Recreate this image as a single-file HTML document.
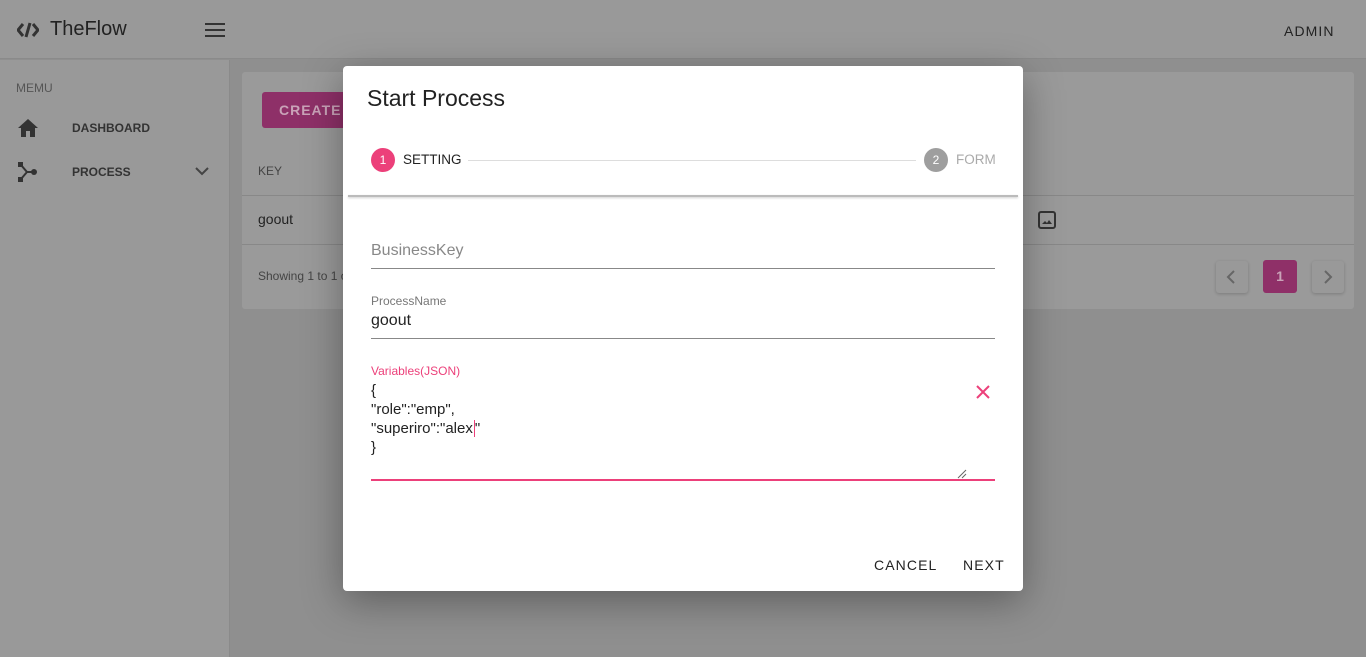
<!DOCTYPE html>
<html><head><meta charset="utf-8"><style>
*{box-sizing:border-box;margin:0;padding:0}
body{width:1366px;height:657px;overflow:hidden;font-family:"Liberation Sans",sans-serif;background:#8f8f8f;position:relative;color:#333}
.hdr{position:absolute;left:0;top:0;width:1366px;height:59px;background:#999;border-bottom:1px solid #8a8a8a}
.side{position:absolute;left:0;top:60px;width:230px;height:597px;background:#999;border-right:1px solid #8a8a8a}
.card{position:absolute;left:242px;top:72px;width:1112px;height:237px;background:#9a9a9a;border-radius:3px}
.abs{position:absolute}
.dlg{position:absolute;left:343px;top:66px;width:680px;height:525px;background:#fff;border-radius:4px;box-shadow:0 10px 40px rgba(0,0,0,.35)}
.lbl{font-size:12px;color:#777}
</style></head><body>
<div class="hdr">
 <svg class="abs" style="left:17px;top:21px" width="22" height="18" viewBox="0 0 22 18"><path d="M6 3 L1 9 L6 15 M16 3 L21 9 L16 15 M13 2 L9 16" stroke="#333" stroke-width="3" fill="none"/></svg>
 <div class="abs" style="left:50px;top:18px;font-size:20px;color:#222">TheFlow</div>
 <svg class="abs" style="left:205px;top:23px" width="20" height="14"><path d="M0 1h20M0 7h20M0 13h20" stroke="#333" stroke-width="2"/></svg>
 <div class="abs" style="left:1284px;top:23px;font-size:14px;letter-spacing:1.1px;color:#222">ADMIN</div>
</div>
<div class="side">
 <div class="abs lbl" style="left:16px;top:21px;color:#555">MEMU</div>
 <svg class="abs" style="left:18px;top:59px" width="20" height="18" viewBox="0 0 20 18"><path d="M10 0L0 9h3v9h5v-6h4v6h5V9h3z" fill="#333"/></svg>
 <div class="abs" style="left:72px;top:61px;font-size:12px;font-weight:bold;color:#333">DASHBOARD</div>
 <svg class="abs" style="left:18px;top:102px" width="20" height="20" viewBox="0 0 20 20"><rect x="0" y="0" width="5" height="5" fill="#333"/><rect x="0" y="15" width="5" height="5" fill="#333"/><circle cx="16" cy="10" r="3" fill="#333"/><path d="M3 3L9 10H16M3 17L9 10" stroke="#333" stroke-width="2" fill="none"/></svg>
 <div class="abs" style="left:72px;top:105px;font-size:12px;font-weight:bold;color:#333">PROCESS</div>
 <svg class="abs" style="left:195px;top:107px" width="14" height="9"><path d="M1 1l6 6 6-6" stroke="#444" stroke-width="2" fill="none"/></svg>
</div>
<div class="card">
 <div class="abs" style="left:20px;top:20px;width:100px;height:36px;background:#8e3068;border-radius:3px;color:#c9a3b8;font-weight:bold;font-size:14px;letter-spacing:1px;padding:10px 17px">CREATE</div>
 <div class="abs lbl" style="left:16px;top:92px;color:#444">KEY</div>
 <div class="abs" style="left:0;top:123px;width:1112px;border-top:1px solid #888"></div>
 <div class="abs" style="left:16px;top:139px;font-size:14px;color:#222">goout</div>
 <svg class="abs" style="left:796px;top:139px" width="18" height="18"><rect x="1" y="1" width="16" height="16" rx="2" stroke="#333" stroke-width="2" fill="none"/><path d="M4 13l3-3 2 2 2-3 3 4z" fill="#333"/></svg>
 <div class="abs" style="left:0;top:172px;width:1112px;border-top:1px solid #888"></div>
 <div class="abs" style="left:16px;top:197px;font-size:12px;color:#444">Showing 1 to 1 of</div>
 <div class="abs" style="left:974px;top:189px;width:32px;height:32px;background:#999;border-radius:3px;box-shadow:0 1px 3px rgba(0,0,0,.2)"><svg style="margin:9px 10px" width="10" height="14"><path d="M8 1L2 7l6 6" stroke="#666" stroke-width="2" fill="none"/></svg></div>
 <div class="abs" style="left:1021px;top:188px;width:34px;height:33px;background:#8f3068;border-radius:3px;color:#c9a3b8;font-size:14px;text-align:center;line-height:33px;font-weight:bold">1</div>
 <div class="abs" style="left:1070px;top:189px;width:32px;height:32px;background:#999;border-radius:3px;box-shadow:0 1px 3px rgba(0,0,0,.2)"><svg style="margin:9px 11px" width="10" height="14"><path d="M2 1l6 6-6 6" stroke="#666" stroke-width="2" fill="none"/></svg></div>
</div>
<div class="dlg">
 <div class="abs" style="left:24px;top:19px;font-size:23px;color:#222">Start Process</div>
 <div class="abs" style="left:28px;top:82px;width:24px;height:24px;border-radius:50%;background:#ec407a;color:#fff;font-size:12px;text-align:center;line-height:24px">1</div>
 <div class="abs" style="left:60px;top:86px;font-size:13.5px;color:#222">SETTING</div>
 <div class="abs" style="left:125px;top:94px;width:448px;border-top:1px solid #ddd"></div>
 <div class="abs" style="left:581px;top:82px;width:24px;height:24px;border-radius:50%;background:#9e9e9e;color:#fff;font-size:12px;text-align:center;line-height:24px">2</div>
 <div class="abs" style="left:613px;top:86px;font-size:13.5px;color:#aaa">FORM</div>
 <div class="abs" style="left:5px;top:129px;width:670px;height:2px;background:#bbb;box-shadow:0 1px 2px rgba(0,0,0,.2)"></div>
 <div class="abs" style="left:28px;top:176px;font-size:16px;color:#888">BusinessKey</div>
 <div class="abs" style="left:28px;top:202px;width:624px;border-top:1px solid #888"></div>
 <div class="abs lbl" style="left:28px;top:228px">ProcessName</div>
 <div class="abs" style="left:28px;top:246px;font-size:16px;color:#222">goout</div>
 <div class="abs" style="left:28px;top:272px;width:624px;border-top:1px solid #888"></div>
 <div class="abs lbl" style="left:28px;top:298px;color:#ec407a">Variables(JSON)</div>
 <div class="abs" style="left:28px;top:315px;font-size:15px;line-height:19px;color:#222">{<br>"role":"emp",<br>"superiro":"alex<span style="border-left:1px solid #ec407a;margin-left:1px"></span>"<br>}</div>
 <svg class="abs" style="left:633px;top:319px" width="14" height="14"><path d="M1 1l12 12M13 1L1 13" stroke="#ec407a" stroke-width="2"/></svg>
 <svg class="abs" style="left:614px;top:403px" width="10" height="10"><path d="M1 9L9 1M5 9L9 5" stroke="#666" stroke-width="1"/></svg>
 <div class="abs" style="left:28px;top:413px;width:624px;height:2px;background:#ec407a"></div>
 <div class="abs" style="left:531px;top:491px;font-size:14px;letter-spacing:1.1px;color:#222">CANCEL</div>
 <div class="abs" style="left:620px;top:491px;font-size:14px;letter-spacing:1.1px;color:#222">NEXT</div>
</div>
</body></html>
